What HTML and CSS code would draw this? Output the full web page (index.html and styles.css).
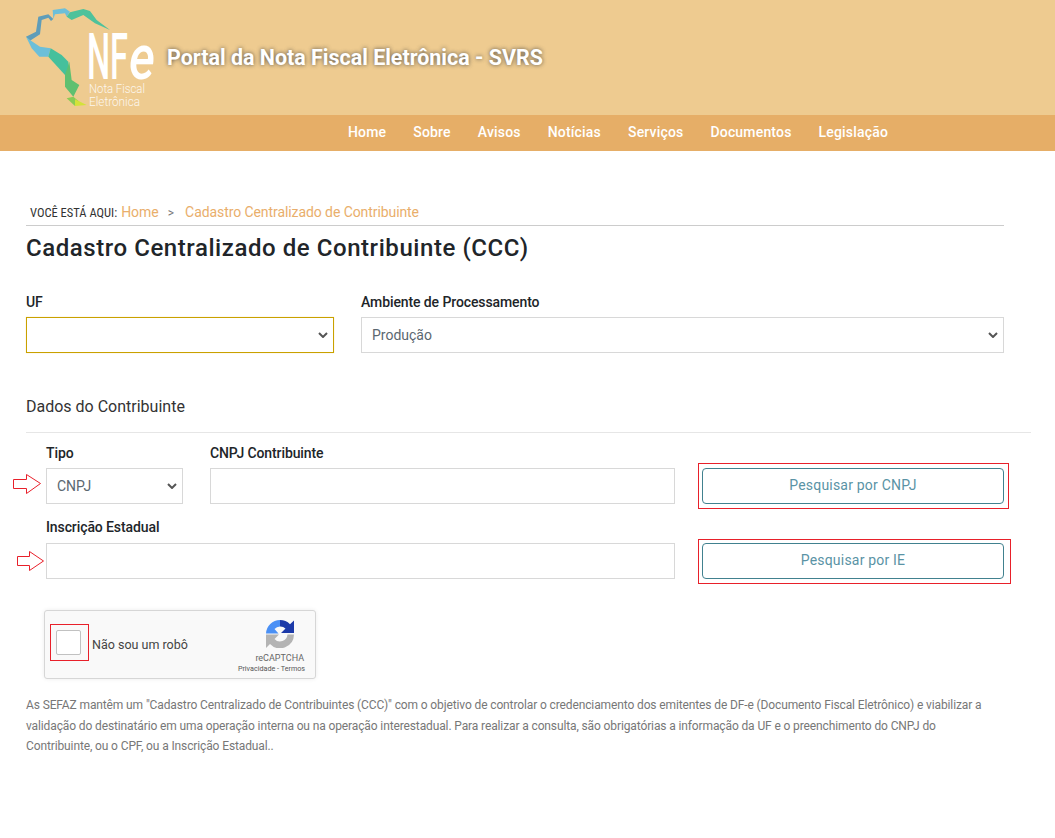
FILE: index.html
```html
<!DOCTYPE html>
<html lang="pt-BR">
<head>
<meta charset="utf-8">
<title>Cadastro Centralizado de Contribuinte</title>
<link rel="stylesheet" href="styles.css">
</head>
<body>
<header class="banner">
  <svg class="logo" width="160" height="110" viewBox="0 0 160 110">
    <g transform="translate(20 5) scale(.3333)">
      <polygon points="18,95 48,80 55,35 85,28 100,42 93,48 85,38 65,45 60,88 30,107" fill="#5f9db9"/>
      <polygon points="18,95 30,105 60,125 92,130 85,155 58,155 35,130" fill="#6cbfd9"/>
      <polygon points="98,15 135,10 150,20 140,35 135,25 105,28 100,42" fill="#6cbfd9"/>
      <polygon points="140,35 150,22 190,12 210,18 230,45 270,75 225,55 190,30 155,45" fill="#4ec29b"/>
      <polygon points="85,155 92,130 125,150 145,170 148,215 135,210" fill="#45c09c"/>
      <polygon points="135,210 148,170 155,225 178,240 160,275 135,245" fill="#5fc070"/>
      <polygon points="160,275 140,280 165,303 178,290" fill="#8acb55"/>
      <polygon points="165,283 200,300 165,303" fill="#d3e23a"/>
    </g>
    <text x="87" y="79" class="logo-nf" textLength="41" lengthAdjust="spacingAndGlyphs">NF</text>
    <text x="129" y="79" class="logo-e" textLength="26" lengthAdjust="spacingAndGlyphs">e</text>
    <text x="89" y="93" class="logo-sub" textLength="56" lengthAdjust="spacingAndGlyphs">Nota Fiscal</text>
    <text x="89" y="106" class="logo-sub" textLength="51" lengthAdjust="spacingAndGlyphs">Eletrônica</text>
  </svg>
  <h2 class="portal-title">Portal da Nota Fiscal Eletrônica - SVRS</h2>
</header>
<nav class="nav">
  <a class="nav-link" href="#">Home</a>
  <a class="nav-link" href="#">Sobre</a>
  <a class="nav-link" href="#">Avisos</a>
  <a class="nav-link" href="#">Notícias</a>
  <a class="nav-link" href="#">Serviços</a>
  <a class="nav-link" href="#">Documentos</a>
  <a class="nav-link" href="#">Legislação</a>
</nav>
<main class="content">
  <div class="crumbs">
    <span class="crumb-label">VOCÊ ESTÁ AQUI:</span>
    <a class="crumb-link" href="#">Home</a>
    <span class="crumb-sep">&gt;</span>
    <span class="crumb-link crumb-current">Cadastro Centralizado de Contribuinte</span>
  </div>
  <h1 class="title">Cadastro Centralizado de Contribuinte (CCC)</h1>
  <div class="top-fields">
    <div class="field">
      <label class="label">UF</label>
      <select class="control select control-focus"><option></option></select>
    </div>
    <div class="field">
      <label class="label">Ambiente de Processamento</label>
      <select class="control select"><option>Produção</option></select>
    </div>
  </div>
  <h3 class="section-title">Dados do Contribuinte</h3>
  <div class="form-grid">
    <div class="field">
      <label class="label">Tipo</label>
      <select class="control select"><option>CNPJ</option></select>
      <svg class="arrow arrow-a" width="28" height="20" viewBox="0 0 28 20"><polygon points="0.5,5.5 13.5,5.5 13.5,0.5 27.5,9.5 13.5,19.5 13.5,14.5 0.5,14.5" fill="#fff" stroke="#e8202a"/></svg>
    </div>
    <div class="field">
      <label class="label">CNPJ Contribuinte</label>
      <input class="control" type="text">
    </div>
    <div class="mark mark-cnpj"><button class="btn" type="button">Pesquisar por CNPJ</button></div>
    <div class="field ie">
      <label class="label">Inscrição Estadual</label>
      <input class="control" type="text">
      <svg class="arrow arrow-b" width="27" height="20" viewBox="0 0 27 20"><polygon points="0.5,5.5 12.5,5.5 12.5,0.5 26.5,10 12.5,19.5 12.5,14.5 0.5,14.5" fill="#fff" stroke="#e8202a"/></svg>
    </div>
    <div class="mark mark-ie"><button class="btn" type="button">Pesquisar por IE</button></div>
  </div>
  <div class="captcha">
    <div class="captcha-mark"><span class="captcha-box"></span></div>
    <span class="captcha-text">Não sou um robô</span>
    <div class="captcha-brand">
      <svg class="captcha-icon" width="28" height="28" viewBox="0 0 28 28">
        <path d="M0 28 V14.5 H13 L8.5 19 A7.5 7.5 0 0 0 21.5 14.5 H28 A14 14 0 0 1 4 24 Z" fill="#b4b4b4"/>
        <path d="M14 0 V6.5 A7.5 7.5 0 0 0 8.5 9 L12.5 13.5 H0 A14 14 0 0 1 14 0 Z" fill="#4a90f5"/>
        <path d="M14 0 A14 14 0 0 1 24 4.2 L28 0.5 V13 H15 L19.5 8.5 A7.5 7.5 0 0 0 14 6.5 Z" fill="#1c3aa9"/>
      </svg>
      <span class="captcha-name">reCAPTCHA</span>
      <span class="captcha-links">Privacidade - Termos</span>
    </div>
  </div>
  <p class="note">As SEFAZ mantêm um "Cadastro Centralizado de Contribuintes (CCC)" com o objetivo de controlar o credenciamento dos emitentes de DF-e (Documento Fiscal Eletrônico) e viabilizar a validação do destinatário em uma operação interna ou na operação interestadual. Para realizar a consulta, são obrigatórias a informação da UF e o preenchimento do CNPJ do Contribuinte, ou o CPF, ou a Inscrição Estadual..</p>
</main>
</body>
</html>
```
FILE: styles.css
```css
* { box-sizing: border-box; }
html, body { margin: 0; padding: 0; }
body { background: #fff; font-family: Roboto, "Liberation Sans", sans-serif; color: #212529; }
.banner { height: 115px; background: #eecb90; display: flex; align-items: flex-start; }
.logo { display: block; flex: none; }
.logo-nf { font: 500 64px Roboto, sans-serif; fill: #fff; }
.logo-e { font: italic 500 62px Roboto, sans-serif; fill: #fff; }
.logo-sub { font: 300 12px Roboto, sans-serif; fill: #fff; opacity: .85; }
.portal-title { margin: 44px 0 0 7px; font-size: 21.45px; line-height: 28px; font-weight: 700; color: #fff; text-shadow: 0 0 4px rgba(60,60,60,.85); }
.nav { height: 36px; padding-bottom: 2px; background: #e6ae67; display: flex; align-items: center; gap: 27px; padding-left: 348px; }
.nav-link { color: #fff; font-size: 14px; font-weight: 500; letter-spacing: .18px; text-decoration: none; }
.content { padding: 53px 24px 0 26px; }
.crumbs { width: 978px; height: 22px; border-bottom: 1px solid #ccc; padding-left: 4px; display: flex; align-items: baseline; gap: 4px; font-size: 14px; line-height: 16px; }
.crumb-label { font-size: 12.5px; color: #333; font-family: "Roboto Condensed", Roboto, sans-serif; }
.crumb-link { color: #e9ae6b; text-decoration: none; }
.crumb-current { letter-spacing: -.08px; }
.crumb-sep { color: #777; font-size: 12px; margin: 0 7px 0 5px; }
.title { margin: 7px 0 0; font-size: 24px; line-height: 30px; font-weight: 500; letter-spacing: .56px; color: #212529; }
.top-fields { display: grid; grid-template-columns: 308px 643px; column-gap: 27px; margin-top: 31px; }
.field { display: flex; flex-direction: column; position: relative; min-width: 0; }
.label { font-size: 14px; line-height: 16px; font-weight: 500; letter-spacing: -.1px; margin-bottom: 7px; color: #212529; }
.control { display: block; width: 100%; height: 36px; border: 1px solid #d8d8d8; border-radius: 0; background: #fff; padding: 0 6px; color: #5b6770; font: 400 14px Roboto, sans-serif; outline: none; }
.select { appearance: none; -webkit-appearance: none; padding: 0 20px 0 10px; background-image: url("data:image/svg+xml,%3Csvg xmlns='http://www.w3.org/2000/svg' width='10' height='6'%3E%3Cpath d='M1 1l4 4 4-4' fill='none' stroke='%23555' stroke-width='2'/%3E%3C/svg%3E"); background-repeat: no-repeat; background-position: right 5px center; }
.control-focus { border-color: #c9a100; box-shadow: 0 0 1px #efd9a0; }
.section-title { margin: 44px 0 0; font-size: 16px; line-height: 19px; font-weight: 400; color: #333; padding-bottom: 16px; border-bottom: 1px solid #e6e6e6; }
.form-grid { display: grid; grid-template-columns: 137px 465px 1fr; column-gap: 27px; row-gap: 15px; margin-top: 12px; padding-left: 20px; width: 1005px; }
.ie { grid-column: 1 / 3; }
.ie .label { margin-bottom: 8px; }
.arrow { position: absolute; }
.arrow-a { left: -33px; top: 29px; }
.arrow-b { left: -29px; top: 32px; }
.mark { border: 1px solid #e8202a; align-self: end; display: flex; margin-left: -4px; }
.mark-cnpj { width: 311px; height: 46px; margin-bottom: -5px; padding: 4px 4px 4px 3px; }
.mark-ie { width: 313px; height: 45px; margin-bottom: -5px; padding: 3px 6px 4px 3px; }
.btn { flex: 1; height: 36px; padding: 0 0 2px; background: #fff; border: 1px solid #41818f; border-radius: 4px; color: #5a93a5; font: 400 14px Roboto, sans-serif; letter-spacing: .2px; }
.captcha { margin: 31px 0 0 18px; width: 272px; height: 69px; border: 1px solid #d6d6d6; border-radius: 3px; background: #f9f9f9; box-shadow: 0 0 4px rgba(0,0,0,.08); display: flex; align-items: center; padding: 0 10px 0 5px; }
.captcha-mark { width: 39px; height: 37px; margin-bottom: 4px; padding-right: 2px; border: 1px solid #e8202a; display: flex; align-items: center; justify-content: center; }
.captcha-box { width: 25px; height: 25px; background: #fff; border: 1px solid #c1c1c1; border-radius: 2px; }
.captcha-text { margin-left: 3px; font-size: 12.5px; color: #444; flex: 1; }
.captcha-brand { display: flex; flex-direction: column; align-items: flex-end; align-self: flex-start; padding-top: 9px; }
.captcha-icon { margin-right: 11px; }
.captcha-name { font-size: 9px; line-height: 11px; color: #666; margin: 5px 1px 0 0; }
.captcha-links { font-size: 7.2px; line-height: 10px; color: #555; white-space: nowrap; }
.note { margin: 16px 0 0; width: 970px; font-size: 12px; line-height: 20.5px; letter-spacing: -.12px; color: #777; }
```
